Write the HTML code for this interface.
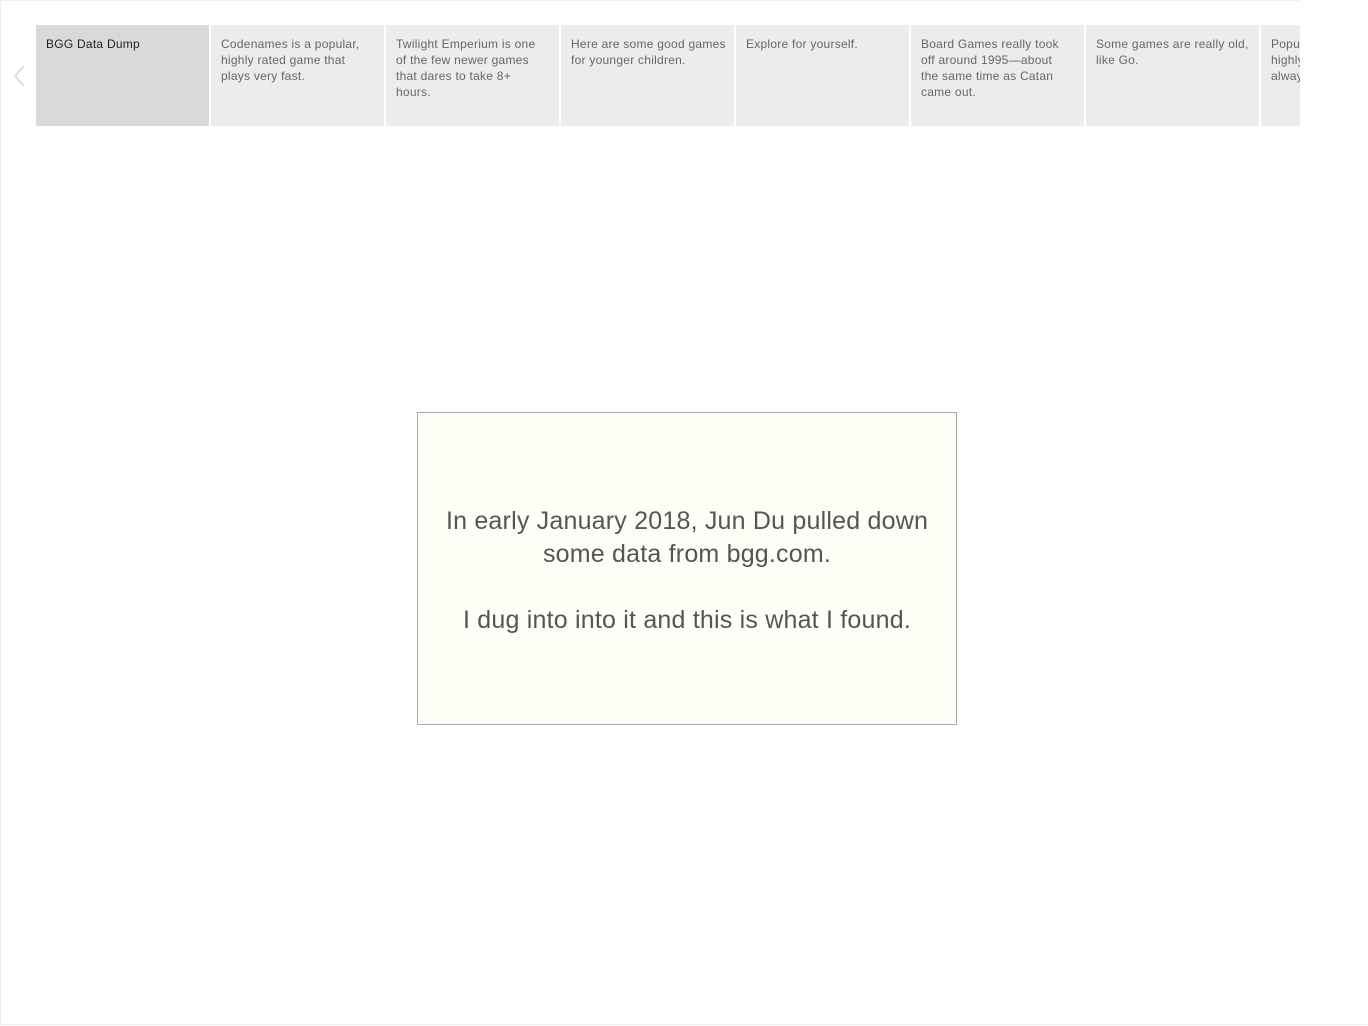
<!DOCTYPE html>
<html><head><style>
html,body{margin:0;padding:0;background:#fff;}
body{width:1368px;height:1026px;position:relative;overflow:hidden;font-family:"Liberation Sans",sans-serif;}
.frame{position:absolute;left:0;top:0;width:1366px;height:1024px;border-left:1px solid #eee;border-bottom:1px solid #eee;}
.topline{position:absolute;left:0;top:0;width:1300px;height:1px;background:#f0f0f0;}
.strip{position:absolute;left:36px;top:25px;width:1264px;height:101px;overflow:hidden;}
.card{position:absolute;top:0;width:173px;height:101px;background:#ececec;box-sizing:border-box;padding:11px 0 0 10px;font-size:12px;line-height:16px;color:#666;letter-spacing:0.25px;white-space:nowrap;overflow:hidden;}
.card.sel{background:#d9d9d9;color:#222;}
.arrow{position:absolute;left:12px;top:64px;}
.box{position:absolute;left:417px;top:412px;width:538px;height:311px;border:1px solid #aaa;background:#fffef6;text-align:center;color:#555;font-size:25px;letter-spacing:0.2px;line-height:33px;white-space:nowrap;}
.box .t{position:absolute;left:0;right:0;top:92px;}
</style></head><body>
<div class="frame"></div>
<div class="topline"></div>
<svg class="arrow" width="14" height="26" viewBox="0 0 14 26"><path d="M12 2 L3 12 L12 22" fill="none" stroke="#ddd" stroke-width="2"/></svg>
<div class="strip">
<div class="card sel" style="left:0">BGG Data Dump</div>
<div class="card" style="left:175px">Codenames is a popular,<br>highly rated game that<br>plays very fast.</div>
<div class="card" style="left:350px">Twilight Emperium is one<br>of the few newer games<br>that dares to take 8+<br>hours.</div>
<div class="card" style="left:525px">Here are some good games<br>for younger children.</div>
<div class="card" style="left:700px">Explore for yourself.</div>
<div class="card" style="left:875px">Board Games really took<br>off around 1995—about<br>the same time as Catan<br>came out.</div>
<div class="card" style="left:1050px">Some games are really old,<br>like Go.</div>
<div class="card" style="left:1225px">Popular games are<br>highly rated, but not<br>always.</div>
</div>
<div class="box"><div class="t">In early January 2018, Jun Du pulled down<br>some data from bgg.com.<br><br>I dug into into it and this is what I found.</div></div>
</body></html>
